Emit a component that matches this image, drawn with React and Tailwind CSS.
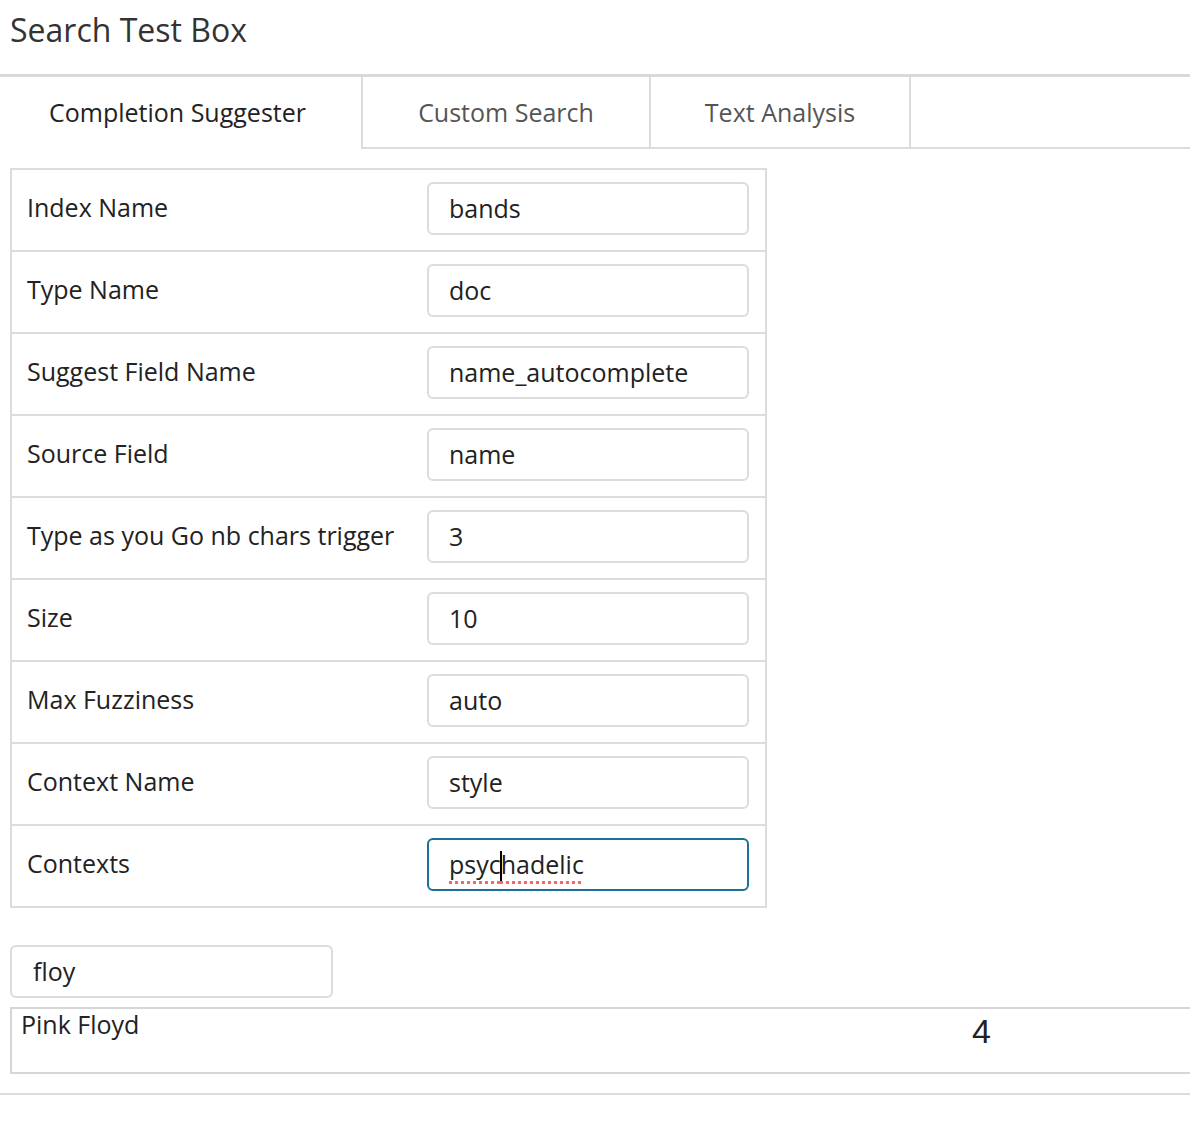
const fields = [
  { label: "Index Name", value: "bands" },
  { label: "Type Name", value: "doc" },
  { label: "Suggest Field Name", value: "name_autocomplete" },
  { label: "Source Field", value: "name" },
  { label: "Type as you Go nb chars trigger", value: "3" },
  { label: "Size", value: "10" },
  { label: "Max Fuzziness", value: "auto" },
  { label: "Context Name", value: "style" },
];

const FieldRow = ({ label, children }) => (
  <div className="flex h-[82px] items-start border-b-2 border-[#dcdcdc] pt-[12px] last:h-[80px] last:border-b-0">
    <div className="flex h-[53px] w-[415px] items-center pb-[3px] pl-[15px] text-[#222]">{label}</div>
    {children}
  </div>
);

const TextBox = ({ value }) => (
  <div className="flex h-[53px] w-[322px] items-center rounded-[6px] border-2 border-[#dcdcdc] pb-[2px] pl-[20px] text-[#222]">
    {value}
  </div>
);

export default function App() {
  return (
    <div
      className="w-[1190px] overflow-hidden bg-white text-[25px] leading-[normal]"
      style={{ fontFamily: "'Open Sans', sans-serif" }}
    >
      {/* Header */}
      <div className="h-[74px] pl-[10px] pt-[8px]">
        <h1 className="text-[32px] leading-[normal] text-[#333]">Search Test Box</h1>
      </div>

      {/* Tabs */}
      <div className="flex h-[75px] border-t-[3px] border-[#d9d9d9]">
        <div className="flex w-[361px] items-center justify-center pb-[2px] pr-[6px] text-[#222]">
          Completion Suggester
        </div>
        <div className="flex w-[288px] items-center justify-center border-b-2 border-l-2 border-[#dcdcdc] text-[#555]">
          Custom Search
        </div>
        <div className="flex w-[262px] items-center justify-center border-x-2 border-b-2 border-[#dcdcdc] text-[#555]">
          Text Analysis
        </div>
        <div className="flex-1 border-b-2 border-[#dcdcdc]" />
      </div>

      {/* Settings table */}
      <div className="ml-[10px] mt-[19px] w-[757px] border-2 border-[#dcdcdc]">
        {fields.map((f) => (
          <FieldRow key={f.label} label={f.label}>
            <TextBox value={f.value} />
          </FieldRow>
        ))}
        <FieldRow label="Contexts">
          <div className="flex h-[53px] w-[322px] items-center rounded-[6px] border-2 border-[#1b6f98] pb-[2px] pl-[20px] text-[#222]">
            <span className="underline decoration-[#f26a6a] decoration-dotted decoration-[3px] underline-offset-[7px]">
              psyc
              <span className="relative inline-block h-[30px] w-[2px] -mx-[1px] bg-black align-[-7px]" />
              hadelic
            </span>
          </div>
        </FieldRow>
      </div>

      {/* Search box */}
      <div className="ml-[10px] mt-[37px] flex h-[53px] w-[323px] items-center rounded-[6px] border-2 border-[#dcdcdc] pb-[2px] pl-[21px] text-[#222]">
        floy
      </div>

      {/* Result */}
      <div className="ml-[10px] mt-[9px] flex h-[67px] w-[1200px] border-2 border-[#d6d6d6] pl-[9px]">
        <div className="w-[951px] leading-[30px] text-[#222]">Pink Floyd</div>
        <div
          className="mt-[3px] text-[34px] leading-[39px] text-[#222]"
          style={{ fontFamily: "'Liberation Sans', Arial, sans-serif" }}
        >
          4
        </div>
      </div>

      <div className="mt-[19px] h-[2px] bg-[#dcdcdc]" />
      <div className="h-[40px]" />
    </div>
  );
}
